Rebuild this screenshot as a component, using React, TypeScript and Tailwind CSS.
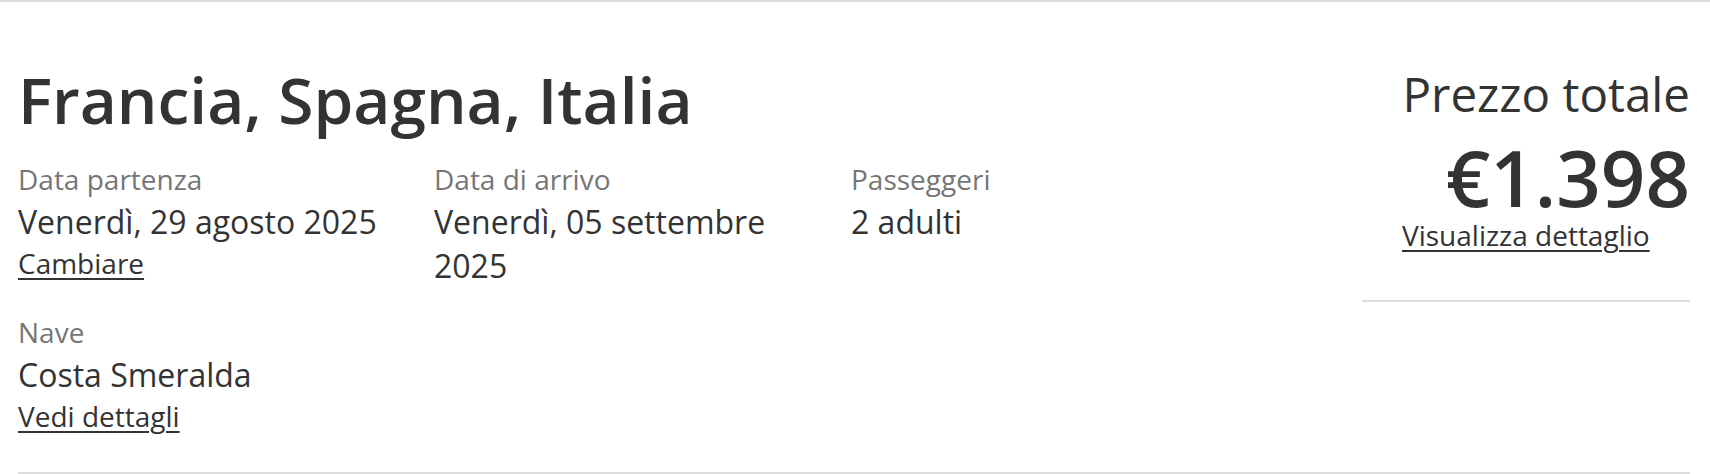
import React from 'react';

const Field: React.FC<{ label: string; value: string; link?: string }> = ({ label, value, link }) => (
  <div className="pr-4">
    <div className="text-[28px] leading-[38px] text-[#767676]">{label}</div>
    <div className="mt-[2px] text-[32px] leading-[44px] text-[#333]">{value}</div>
    {link && (
      <a href="#" className="text-[28px] leading-[38px] text-[#333] underline underline-offset-4 decoration-2">
        {link}
      </a>
    )}
  </div>
);

export default function App() {
  return (
    <div className="w-[1710px] bg-white border-t-2 border-[#dcdcdc]" style={{ fontFamily: '"Open Sans", sans-serif' }}>
      <div className="pl-[18px] pr-[20px] pt-[54px]">
        <div className="flex justify-between border-b-2 border-[#dcdcdc] pb-[37px]">
          {/* Left: trip info */}
          <div className="flex-1">
            <h1 className="text-[64px] leading-[88px] font-semibold text-[#333]">Francia, Spagna, Italia</h1>
            <div className="grid grid-cols-[416px_417px_417px] mt-[16px] gap-y-[25px]">
              <Field label="Data partenza" value="Venerdì, 29 agosto 2025" link="Cambiare" />
              <Field label="Data di arrivo" value="Venerdì, 05 settembre 2025" />
              <Field label="Passeggeri" value="2 adulti" />
              <Field label="Nave" value="Costa Smeralda" link="Vedi dettagli" />
            </div>
          </div>

          {/* Right: price */}
          <div className="w-[328px] self-start mt-[8px]">
            <div className="border-b-2 border-[#dcdcdc] pb-[48px] flex flex-col items-end">
              <div className="w-[288px]">
                <div className="text-[47.5px] leading-[60px] text-[#333] text-right whitespace-nowrap">Prezzo totale</div>
                <div className="mt-[15px] text-[78px] leading-[76px] font-semibold text-[#333] text-right">€1.398</div>
                <a href="#" className="block w-fit mt-[3px] text-[28px] leading-[34px] text-[#333] underline underline-offset-4 decoration-2">
                  Visualizza dettaglio
                </a>
              </div>
            </div>
          </div>
        </div>
      </div>
    </div>
  );
}
